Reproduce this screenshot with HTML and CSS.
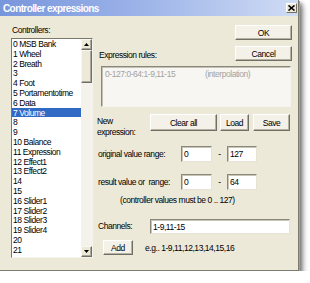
FILE: index.html
```html
<!DOCTYPE html>
<html>
<head>
<meta charset="utf-8">
<link rel="stylesheet" href="styles.css">
</head>
<body>
<div class="window">
  <div class="titlebar">
    <span class="title">Controller expressions</span>
    <span class="close"><svg width="7" height="6" viewBox="0 0 7 6"><path d="M0.5 0.5 L6.5 5.5 M6.5 0.5 L0.5 5.5" stroke="#000" stroke-width="1.6" fill="none"/></svg></span>
  </div>
  <div class="content">
    <div class="left">
      <div class="label ctl-label">Controllers:</div>
      <div class="listbox">
        <ul class="items">
          <li>0 MSB Bank</li>
          <li>1 Wheel</li>
          <li>2 Breath</li>
          <li>3</li>
          <li>4 Foot</li>
          <li>5 Portamentotime</li>
          <li>6 Data</li>
          <li class="sel">7 Volume</li>
          <li>8</li>
          <li>9</li>
          <li>10 Balance</li>
          <li>11 Expression</li>
          <li>12 Effect1</li>
          <li>13 Effect2</li>
          <li>14</li>
          <li>15</li>
          <li>16 Slider1</li>
          <li>17 Slider2</li>
          <li>18 Slider3</li>
          <li>19 Slider4</li>
          <li>20</li>
          <li>21</li>
          <li>22</li>
        </ul>
        <div class="scrollbar">
          <div class="sb-btn"><svg width="5" height="3" viewBox="0 0 5 3"><path d="M2.5 0 L5 3 L0 3 Z" fill="#000"/></svg></div>
          <div class="sb-thumb"></div>
          <div class="sb-track"></div>
          <div class="sb-btn"><svg width="5" height="3" viewBox="0 0 5 3"><path d="M0 0 L5 0 L2.5 3 Z" fill="#000"/></svg></div>
        </div>
      </div>
    </div>
    <div class="right">
      <div class="top">
        <div class="label rules-label">Expression rules:</div>
        <div class="btn-stack">
          <div class="button">OK</div>
          <div class="button">Cancel</div>
        </div>
      </div>
      <div class="rules">
        <span class="rule-expr">0-127:0-64:1-9,11-15</span>
        <span>(interpolation)</span>
      </div>
      <div class="newrow">
        <div class="label new-label">New<br>expression:</div>
        <div class="button b-clear">Clear all</div>
        <div class="button b-load">Load</div>
        <div class="button b-save">Save</div>
      </div>
      <div class="range-row first">
        <div class="label range-label">original value range:</div>
        <div class="field f-a">0</div>
        <div class="dash">-</div>
        <div class="field f-b">127</div>
      </div>
      <div class="range-row second">
        <div class="label range-label">result value or&nbsp; range:</div>
        <div class="field f-a">0</div>
        <div class="dash">-</div>
        <div class="field f-b">64</div>
      </div>
      <div class="note">(controller values must be 0 .. 127)</div>
      <div class="channels-row">
        <div class="label ch-label">Channels:</div>
        <div class="field f-ch">1-9,11-15</div>
      </div>
      <div class="add-row">
        <div class="button b-add">Add</div>
        <div class="eg">e.g.. 1-9,11,12,13,14,15,16</div>
      </div>
    </div>
  </div>
</div>
</body>
</html>
```
FILE: styles.css
```css
html, body {
  margin: 0;
  padding: 0;
  background: #ffffff;
}
body {
  font-family: "Liberation Sans", Arial, sans-serif;
  font-size: 8.5px;
  letter-spacing: -0.45px;
  color: #000;
}
.window {
  width: 299px;
  height: 271px;
  box-sizing: border-box;
  background: #ece9d8;
  border-right: 1px solid #7d7b6e;
  border-bottom: 1px solid #7d7b6e;
  box-shadow: 1px 1px 0 #a09f98, 3px 3px 4px rgba(0,0,0,0.45), 5px 6px 6px rgba(0,0,0,0.2);
  display: flex;
  flex-direction: column;
}
.titlebar {
  height: 16px;
  flex: none;
  display: flex;
  align-items: center;
  justify-content: space-between;
  padding: 0 1px 0 3px;
  background: linear-gradient(90deg, #7896dc 0%, #9ab2e8 45%, #d0dcf4 100%);
}
.title {
  color: #fff;
  font-weight: bold;
  font-size: 10px;
  letter-spacing: -0.6px;
}
.close {
  width: 11px;
  height: 10px;
  box-sizing: border-box;
  background: #ece9d8;
  border: 1px solid;
  border-color: #fff #716f64 #716f64 #fff;
  display: flex;
  align-items: center;
  justify-content: center;
}
.close svg { display: block; }
.content {
  flex: 1;
  display: flex;
  padding: 9px 0 0 11px;
}
.label {
  line-height: 11px;
  white-space: nowrap;
}
.left {
  width: 82px;
  display: flex;
  flex-direction: column;
}
.ctl-label {
  height: 11px;
  margin-bottom: 2px;
  padding-left: 1px;
}
.listbox {
  height: 220px;
  box-sizing: border-box;
  border: 1px solid;
  border-color: #7a7868 #f4f3ee #f4f3ee #7a7868;
  background: #fff;
  display: flex;
  overflow: hidden;
}
.items {
  flex: 1;
  list-style: none;
  margin: 0;
  padding: 0;
  overflow: hidden;
}
.items li {
  height: 9.8px;
  line-height: 10px;
  padding-left: 1px;
  white-space: nowrap;
}
.items li.sel {
  background: #316ac5;
  color: #fff;
}
.scrollbar {
  width: 11px;
  flex: none;
  display: flex;
  flex-direction: column;
}
.sb-btn, .sb-thumb {
  box-sizing: border-box;
  background: #ece9d8;
  border: 1px solid;
  border-color: #f8f7f2 #716f64 #716f64 #f8f7f2;
  box-shadow: inset -1px -1px 0 #aca899;
}
.sb-btn {
  height: 11px;
  flex: none;
  display: flex;
  align-items: center;
  justify-content: center;
}
.sb-btn svg { display: block; }
.sb-thumb {
  height: 33px;
  flex: none;
}
.sb-track {
  flex: 1;
  background: #f4f2ea;
}
.right {
  width: 195px;
  margin-left: 4px;
  display: flex;
  flex-direction: column;
}
.top {
  display: flex;
  justify-content: space-between;
  align-items: flex-end;
}
.rules-label {
  padding-left: 2px;
}
.btn-stack {
  width: 57px;
  display: flex;
  flex-direction: column;
  gap: 6px;
}
.button {
  box-sizing: border-box;
  height: 15px;
  background: #f3f1e8;
  border: 1px solid;
  border-color: #ffffff #716f64 #716f64 #ffffff;
  box-shadow: inset -1px -1px 0 #b4b1a2;
  display: flex;
  align-items: center;
  justify-content: center;
  white-space: nowrap;
}
.rules {
  margin: 5px 1px 0 4px;
  height: 41px;
  box-sizing: border-box;
  border: 1px solid;
  border-color: #8a887b #f4f3ee #f4f3ee #8a887b;
  box-shadow: inset 1px 1px 0 #c4c1b4;
  background: #f7f6f2;
  color: #a3a3a3;
  padding: 2px 3px;
  display: flex;
  line-height: 11px;
}
.rule-expr {
  width: 100px;
}
.newrow {
  margin-top: 7px;
  height: 17px;
  display: flex;
}
.new-label {
  width: 53px;
  padding-top: 2px;
}
.newrow .button {
  height: 17px;
}
.b-clear { width: 67px; }
.b-load { width: 29px; margin-left: 3px; }
.b-save { width: 37px; margin-left: 4px; }
.range-row {
  height: 16px;
  display: flex;
  align-items: center;
}
.range-row.first { margin-top: 15px; }
.range-row.second { margin-top: 12px; }
.range-label {
  width: 84px;
  padding-left: 1px;
  box-sizing: border-box;
}
.field {
  box-sizing: border-box;
  height: 16px;
  background: #fff;
  border: 1px solid;
  border-color: #8a887b #e6e3d6 #e6e3d6 #8a887b;
  box-shadow: inset 1px 1px 0 #c9c6b8;
  padding-left: 2px;
  display: flex;
  align-items: center;
  white-space: nowrap;
}
.f-a { width: 31px; }
.f-b { width: 30px; }
.dash {
  width: 15px;
  text-align: center;
}
.note {
  margin-top: 5px;
  padding-left: 23px;
  line-height: 11px;
  white-space: nowrap;
}
.channels-row {
  margin-top: 13px;
  height: 15px;
  display: flex;
  align-items: center;
}
.ch-label {
  width: 53px;
  padding-left: 1px;
  box-sizing: border-box;
}
.f-ch {
  width: 140px;
  height: 15px;
}
.add-row {
  margin-top: 6px;
  display: flex;
  align-items: center;
}
.b-add {
  width: 30px;
  margin-left: 6px;
}
.eg {
  margin-left: 12px;
  white-space: nowrap;
}
```
